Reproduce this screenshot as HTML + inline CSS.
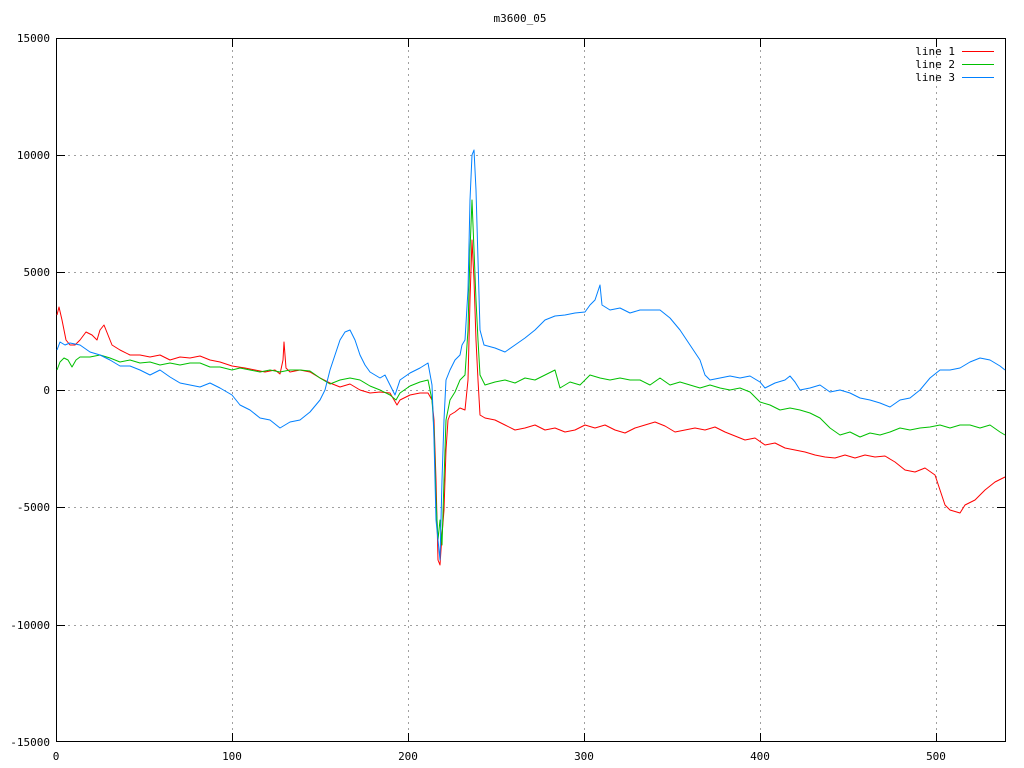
<!DOCTYPE html>
<html><head><meta charset="utf-8"><style>
html,body{margin:0;padding:0;background:#fff;}
svg{display:block;}
text{font-family:"DejaVu Sans Mono","Liberation Mono",monospace;font-size:11px;fill:#000;}
</style></head><body>
<svg width="1024" height="768" viewBox="0 0 1024 768" xmlns="http://www.w3.org/2000/svg">
<rect width="1024" height="768" fill="#fff"/>
<g stroke="#a0a0a0" stroke-width="1" stroke-dasharray="2,4" fill="none" shape-rendering="crispEdges">
<path d="M232.5,38V742M408.5,38V742M584.5,38V742M760.5,38V742M936.5,38V742"/>
<path d="M56,155.5H1006M56,272.5H1006M56,390.5H1006M56,507.5H1006M56,625.5H1006"/>
</g>
<g stroke="#000" stroke-width="1" fill="none" shape-rendering="crispEdges">
<rect x="56.5" y="38.5" width="949" height="703"/>
<path d="M56,155.5h9M56,272.5h9M56,390.5h9M56,507.5h9M56,625.5h9M1006,155.5h-9M1006,272.5h-9M1006,390.5h-9M1006,507.5h-9M1006,625.5h-9"/>
<path d="M232.5,742v-9M408.5,742v-9M584.5,742v-9M760.5,742v-9M936.5,742v-9M232.5,38v9M408.5,38v9M584.5,38v9M760.5,38v9M936.5,38v9"/>
</g>
<text x="520" y="22" text-anchor="middle">m3600_05</text>
<g text-anchor="end">
<text x="50" y="42">15000</text><text x="50" y="159">10000</text><text x="50" y="276">5000</text>
<text x="50" y="394">0</text><text x="50" y="511">-5000</text><text x="50" y="629">-10000</text><text x="50" y="746">-15000</text>
</g>
<g text-anchor="middle">
<text x="56" y="760">0</text><text x="232" y="760">100</text><text x="408" y="760">200</text>
<text x="584" y="760">300</text><text x="760" y="760">400</text><text x="936" y="760">500</text>
</g>
<g text-anchor="end">
<text x="955" y="55">line 1</text><text x="955" y="68">line 2</text><text x="955" y="81">line 3</text>
</g>
<g shape-rendering="crispEdges" stroke-width="1">
<path d="M962,51.5h32" stroke="#ff0000"/>
<path d="M962,64.5h32" stroke="#00c000"/>
<path d="M962,77.5h32" stroke="#0080ff"/>
</g>
<g fill="none" stroke-width="1" stroke-linejoin="round">
<polyline stroke="#ff0000" points="57,315 59,307 62,320 66,340 70,345 75,345 80,340 86,332 92,335 97,340 100,330 104,325 108,335 112,345 120,350 130,355 140,355 150,357 160,355 170,360 180,357 190,358 200,356 210,360 220,362 232,366 245,368 255,370 265,372 275,370 280,374 283,360 284,342 286,368 290,372 300,370 310,372 320,378 330,383 340,387 350,384 360,390 370,393 380,392 390,393 397,405 400,400 410,395 420,393 428,393 432,400 434,420 436,480 438,560 440,565 442,535 444,510 446,450 448,420 450,415 455,412 460,408 465,410 468,380 470,300 472,240 474,280 476,340 478,380 480,415 485,418 495,420 505,425 515,430 525,428 535,425 545,430 555,428 565,432 575,430 585,425 595,428 605,425 615,430 625,433 635,428 645,425 655,422 665,426 675,432 685,430 695,428 705,430 715,427 725,432 735,436 745,440 755,438 765,445 775,443 785,448 795,450 805,452 815,455 825,457 835,458 845,455 855,458 865,455 875,457 885,456 895,462 905,470 915,472 925,468 935,475 940,490 945,505 950,510 960,513 965,505 975,500 985,490 995,482 1005,477"/>
<polyline stroke="#00c000" points="57,370 60,362 64,358 68,360 72,367 76,360 80,357 90,357 100,355 110,358 120,362 130,360 140,363 150,362 160,365 170,363 180,365 190,363 200,363 210,367 220,367 232,370 240,368 250,370 260,372 270,370 280,372 290,370 300,370 310,371 320,378 330,384 340,380 350,378 360,380 370,386 380,390 390,395 396,400 400,393 410,386 420,382 428,380 432,400 434,430 436,500 438,540 440,520 442,545 444,480 446,420 450,400 455,392 460,380 465,375 468,330 470,250 472,200 474,250 476,300 478,340 480,375 485,385 495,382 505,380 515,383 525,378 535,380 545,375 555,370 560,388 570,382 580,385 590,375 600,378 610,380 620,378 630,380 640,380 650,385 660,378 670,385 680,382 690,385 700,388 710,385 720,388 730,390 740,388 750,392 760,402 770,405 780,410 790,408 800,410 810,413 820,418 830,428 840,435 850,432 860,437 870,433 880,435 890,432 900,428 910,430 920,428 930,427 940,425 950,428 960,425 970,425 980,428 990,425 1000,432 1005,435"/>
<polyline stroke="#0080ff" points="57,350 60,342 65,345 70,343 80,345 90,352 100,355 110,360 120,366 130,366 140,370 150,375 160,370 170,377 180,383 190,385 200,387 210,383 220,388 232,395 240,405 250,410 260,418 270,420 280,428 290,422 300,420 310,412 320,400 325,390 330,370 340,340 345,332 350,330 355,340 360,355 365,365 370,372 380,378 385,375 390,385 395,395 400,380 410,373 420,368 428,363 432,385 434,440 436,520 438,540 440,560 442,480 444,420 446,380 450,370 455,360 460,355 462,345 465,340 468,290 470,200 472,155 474,150 476,190 478,260 480,330 484,345 495,348 505,352 515,345 525,338 535,330 545,320 555,316 565,315 575,313 585,312 590,305 595,300 600,285 602,305 610,310 620,308 630,313 640,310 650,310 660,310 670,318 680,330 690,345 700,360 705,375 710,380 720,378 730,376 740,378 750,376 760,382 765,388 775,383 785,380 790,376 795,382 800,390 810,388 820,385 830,392 840,390 850,393 860,398 870,400 880,403 890,407 900,400 910,398 920,390 930,378 940,370 950,370 960,368 970,362 980,358 990,360 1000,366 1005,370"/>
</g>
</svg>
</body></html>
